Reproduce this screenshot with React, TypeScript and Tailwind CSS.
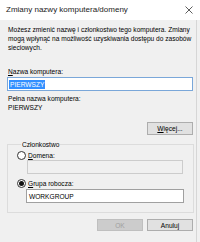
import React from "react";

function Radio({ checked }: { checked?: boolean }) {
  return (
    <span className="flex h-[9px] w-[9px] items-center justify-center rounded-full border border-[#333] bg-white">
      {checked && <span className="h-[5px] w-[5px] rounded-full bg-[#111]" />}
    </span>
  );
}

export default function App() {
  return (
    <div
      className="flex h-[242px] w-[200px] flex-col overflow-hidden bg-[#f0f0f0] text-black"
      style={{ fontFamily: '"Liberation Sans", Arial, sans-serif' }}
    >
      <div className="flex h-[20px] shrink-0 items-center justify-between bg-white pl-[6px] pr-[6px]">
        <span className="text-[8px] text-[#222]">Zmiany nazwy komputera/domeny</span>
        <svg width="8" height="8" viewBox="0 0 8 8" className="mr-[1px]">
          <path d="M0.5 0.5 L7.5 7.5 M7.5 0.5 L0.5 7.5" stroke="#333" strokeWidth="0.8" />
        </svg>
      </div>
      <div className="flex w-[197px] flex-1 flex-col border-r border-[#d6d6d6] pl-[7px] pr-[3px] text-[6.6px] leading-[9px]">
        <p className="mt-[5px] pl-[1px]">
          Możesz zmienić nazwę i członkostwo tego komputera. Zmiany
          <br />
          mogą wpłynąć na możliwość uzyskiwania dostępu do zasobów
          <br />
          sieciowych.
        </p>
        <div className="mt-[15px] pl-[1px]">
          <span className="underline">N</span>azwa komputera:
        </div>
        <div className="mt-[1px] flex h-[14px] items-center border border-[#7aa7d9] bg-white pl-[1px]">
          <span className="bg-[#3390ff] px-[1px] text-white">PIERWSZY</span>
        </div>
        <div className="mt-[3px] pl-[1px]">Pełna nazwa komputera:</div>
        <div className="pl-[1px]">PIERWSZY</div>
        <div className="mt-[10px] flex justify-end">
          <div className="flex h-[13px] w-[46px] items-center justify-center border border-[#adadad] bg-[#e1e1e1]">
            <span>
              <span className="underline">W</span>ięcej...
            </span>
          </div>
        </div>
        <fieldset className="mt-[5px] h-[73px] border border-[#dcdcdc] px-[9px]">
          <legend className="ml-[4px] px-[1px]">Członkostwo</legend>
          <div className="mt-[2px] flex items-center gap-[2px]">
            <Radio />
            <span>
              <span className="underline">D</span>omena:
            </span>
          </div>
          <div className="ml-[10px] h-[14px] w-[156px] border border-[#cccccc] bg-[#f0f0f0]" />
          <div className="mt-[5px] flex items-center gap-[2px]">
            <Radio checked />
            <span>
              <span className="underline">G</span>rupa robocza:
            </span>
          </div>
          <div className="ml-[9px] mt-[1px] flex h-[14px] w-[158px] items-center border border-[#a0a0a0] bg-white pl-[2px]">
            WORKGROUP
          </div>
        </fieldset>
        <div className="mt-[6px] flex justify-end gap-[4px]">
          <div className="flex h-[12px] w-[46px] items-center justify-center border border-[#bfbfbf] bg-[#cccccc] text-[#a0a0a0]">
            OK
          </div>
          <div className="flex h-[12px] w-[46px] items-center justify-center border border-[#adadad] bg-[#e1e1e1]">
            Anuluj
          </div>
        </div>
      </div>
    </div>
  );
}
